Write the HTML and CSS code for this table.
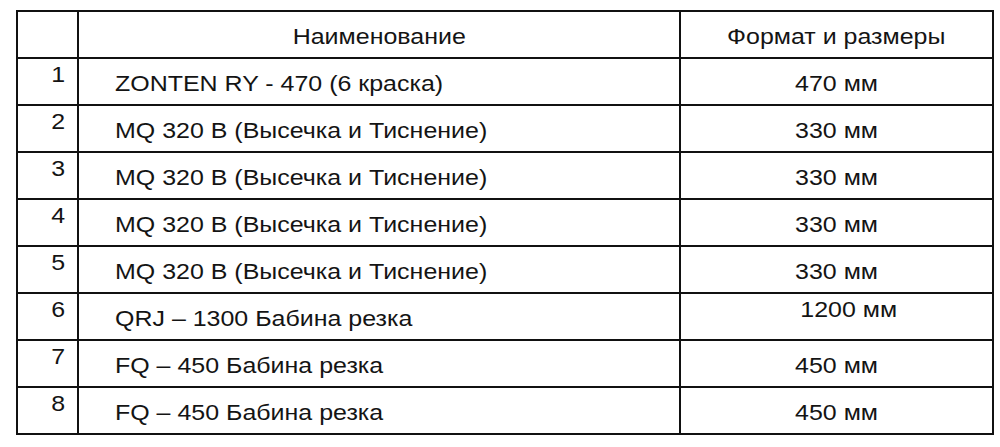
FILE: index.html
```html
<!DOCTYPE html>
<html lang="ru">
<head>
<meta charset="utf-8">
<title>Оборудование</title>
<link rel="stylesheet" href="styles.css">
</head>
<body>
<div class="page">
  <table class="equip">
    <colgroup>
      <col class="c-num">
      <col class="c-name">
      <col class="c-size">
    </colgroup>
    <thead>
      <tr>
        <th class="num"></th>
        <th class="name-h"><span class="t">Наименование</span></th>
        <th class="size"><span class="t">Формат и размеры</span></th>
      </tr>
    </thead>
    <tbody>
      <tr><td class="num"><span class="t">1</span></td><td class="name"><span class="t">ZONTEN RY - 470 (6 краска)</span></td><td class="size"><span class="t">470 мм</span></td></tr>
      <tr><td class="num"><span class="t">2</span></td><td class="name"><span class="t">MQ 320 B (Высечка и Тиснение)</span></td><td class="size"><span class="t">330 мм</span></td></tr>
      <tr><td class="num"><span class="t">3</span></td><td class="name"><span class="t">MQ 320 B (Высечка и Тиснение)</span></td><td class="size"><span class="t">330 мм</span></td></tr>
      <tr><td class="num"><span class="t">4</span></td><td class="name"><span class="t">MQ 320 B (Высечка и Тиснение)</span></td><td class="size"><span class="t">330 мм</span></td></tr>
      <tr><td class="num"><span class="t">5</span></td><td class="name"><span class="t">MQ 320 B (Высечка и Тиснение)</span></td><td class="size"><span class="t">330 мм</span></td></tr>
      <tr><td class="num"><span class="t">6</span></td><td class="name"><span class="t">QRJ – 1300 Бабина резка</span></td><td class="size size-top"><span class="t">1200 мм</span></td></tr>
      <tr><td class="num"><span class="t">7</span></td><td class="name"><span class="t">FQ – 450 Бабина резка</span></td><td class="size"><span class="t">450 мм</span></td></tr>
      <tr><td class="num"><span class="t">8</span></td><td class="name"><span class="t">FQ – 450 Бабина резка</span></td><td class="size"><span class="t">450 мм</span></td></tr>
    </tbody>
  </table>
</div>
</body>
</html>
```

FILE: styles.css
```css
html, body {
  margin: 0;
  padding: 0;
  background: #ffffff;
}

.page {
  padding: 10px 0 0 16px;
}

.equip {
  border-collapse: collapse;
  width: 976px;
  table-layout: fixed;
  font-family: "Liberation Sans", Arial, sans-serif;
  font-size: 22px;
  color: #141414;
  border: 2px solid #111;
}

.c-num { width: 61px; }
.c-name { width: 602px; }
.c-size { width: 313px; }

.equip th,
.equip td {
  border: 2px solid #111;
  height: 41px;
  padding: 4px 0 0 0;
  font-weight: normal;
  line-height: 25px;
}

.t {
  display: inline-block;
  transform: scaleX(1.135);
  transform-origin: center;
  white-space: nowrap;
}

.equip .num {
  text-align: right;
  vertical-align: top;
  height: 42px;
  padding: 3px 12px 0 0;
}

.num .t {
  transform-origin: right;
}

.name-h {
  text-align: center;
  vertical-align: middle;
}

.equip .name {
  text-align: left;
  vertical-align: middle;
  padding-left: 36px;
}

.name .t {
  transform-origin: left;
}

.size {
  text-align: center;
  vertical-align: middle;
}

.equip .size-top {
  vertical-align: top;
  height: 42px;
  padding: 3px 0 0 24px;
}
```
